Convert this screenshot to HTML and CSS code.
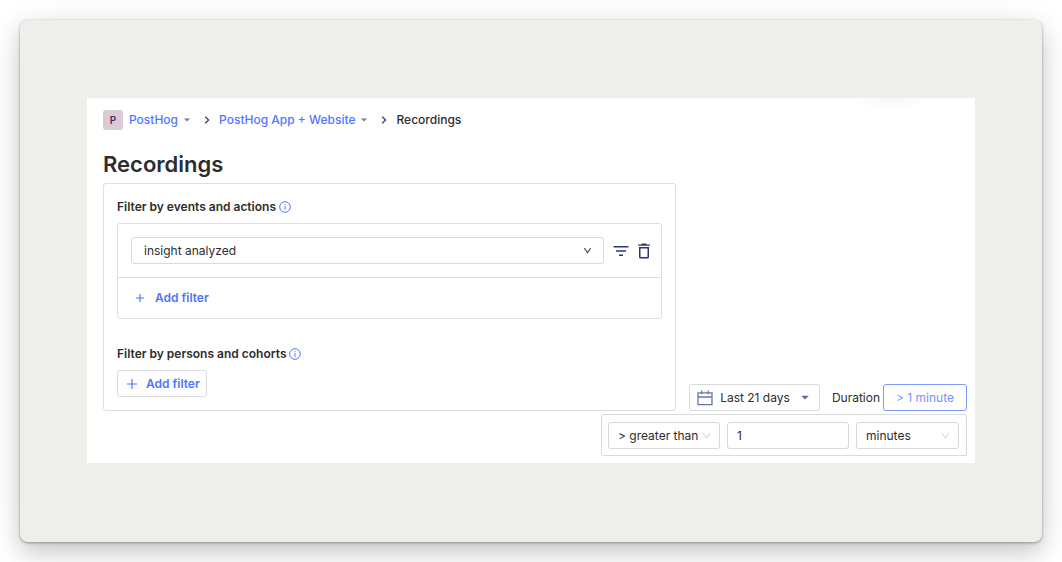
FILE: index.html
```html
<!DOCTYPE html>
<html lang="en">
<head>
<meta charset="utf-8">
<meta name="viewport" content="width=device-width, initial-scale=1">
<title>Recordings</title>
<link rel="stylesheet" href="styles.css">
</head>
<body>
<div class="stage">
  <main class="panel">
    <nav class="breadcrumbs" aria-label="Breadcrumb">
      <span class="avatar">P</span>
      <button class="crumb" type="button">PostHog
        <svg class="caret" viewBox="0 0 6 4" aria-hidden="true"><path d="M0 0.5h6L3 3.5z"/></svg>
      </button>
      <svg class="separator" viewBox="0 0 6 8" aria-hidden="true"><path d="M1.2 0.8 4.6 4 1.2 7.2"/></svg>
      <button class="crumb" type="button">PostHog App + Website
        <svg class="caret" viewBox="0 0 6 4" aria-hidden="true"><path d="M0 0.5h6L3 3.5z"/></svg>
      </button>
      <svg class="separator" viewBox="0 0 6 8" aria-hidden="true"><path d="M1.2 0.8 4.6 4 1.2 7.2"/></svg>
      <span class="current">Recordings</span>
    </nav>

    <h1 class="title">Recordings</h1>

    <div class="columns">
      <section class="filters">
        <div class="filter-label">
          <label for="event">Filter by events and actions</label>
          <svg class="info" viewBox="0 0 12 12" aria-hidden="true"><circle cx="6" cy="6" r="5.3"/><path d="M6 5.2v3.6M6 3.2v1"/></svg>
        </div>
        <div class="event-box">
          <div class="event-row">
            <div class="select select-event">
              <select id="event"><option>insight analyzed</option></select>
              <svg class="chevron chevron-dark" viewBox="0 0 10 10" aria-hidden="true"><path d="M1.5 2.4 5 7.4 8.5 2.4"/></svg>
            </div>
            <button class="icon-button" type="button" aria-label="Filter event">
              <svg class="filter-icon" viewBox="0 0 16 12" aria-hidden="true"><path d="M0.5 1.8h15M3 6h10M6 10.2h4"/></svg>
            </button>
            <button class="icon-button" type="button" aria-label="Delete event">
              <svg class="trash-icon" viewBox="0 0 12 16" aria-hidden="true"><path d="M0.2 1.4h3L4 0.5h4l0.8 0.9h3v1.3H0.2z"/><path fill-rule="evenodd" d="M1 3.9h10v10a1.5 1.5 0 0 1-1.5 1.5h-7A1.5 1.5 0 0 1 1 13.9zM2.5 5.4v8.5h7V5.4z"/></svg>
            </button>
          </div>
          <button class="add-row" type="button">
            <svg class="plus" viewBox="0 0 10 10" aria-hidden="true"><path d="M5 1v8M1 5h8"/></svg>Add filter
          </button>
        </div>

        <div class="filter-label">
          <span>Filter by persons and cohorts</span>
          <svg class="info" viewBox="0 0 12 12" aria-hidden="true"><circle cx="6" cy="6" r="5.3"/><path d="M6 5.2v3.6M6 3.2v1"/></svg>
        </div>
        <button class="add-button" type="button">
          <svg class="plus" viewBox="0 0 10 10" aria-hidden="true"><path d="M5 0v10M0 5h10"/></svg>Add filter
        </button>
      </section>

      <div class="controls">
        <button class="date-button" type="button">
          <svg class="calendar" viewBox="0 0 16 16" aria-hidden="true"><path d="M1 2.8h14v11.9H1zM1 7h14M4.7 0.6v3.6M11.3 0.6v3.6"/></svg>
          Last 21 days
          <svg class="caret caret-large" viewBox="0 0 6 4" aria-hidden="true"><path d="M0 0.5h6L3 3.5z"/></svg>
        </button>
        <div class="duration">
          <span>Duration</span>
          <button class="duration-button" type="button">&gt; 1 minute</button>
        </div>
      </div>
    </div>

    <div class="duration-popup">
      <div class="select select-operator">
        <select aria-label="Operator"><option>&gt; greater than</option></select>
        <svg class="chevron" viewBox="0 0 10 10" aria-hidden="true"><path d="M1.2 2 5 8 8.8 2"/></svg>
      </div>
      <input class="amount" type="text" value="1" aria-label="Duration amount">
      <div class="select select-unit">
        <select aria-label="Duration unit"><option>minutes</option></select>
        <svg class="chevron" viewBox="0 0 10 10" aria-hidden="true"><path d="M1.2 2 5 8 8.8 2"/></svg>
      </div>
    </div>
  </main>
</div>
</body>
</html>
```

FILE: styles.css
```css
* {
  box-sizing: border-box;
}

body {
  margin: 0;
  padding: 20px;
  min-height: 100vh;
  background: #fff;
  color: #2d2d2d;
  font: 12px/20px Inter, "Liberation Sans", sans-serif;
  overflow: hidden;
}

button,
select,
input {
  margin: 0;
  color: inherit;
  font: inherit;
}

button {
  display: flex;
  align-items: center;
  padding: 0;
  border: 0;
  background: none;
  cursor: pointer;
}

svg {
  flex: none;
  fill: none;
}

.stage {
  padding: 78px 67px 79px;
  border-radius: 8px;
  background: #eeeeea;
  box-shadow: 0 0 36px rgba(0, 0, 0, 0.06), 0 12px 24px rgba(0, 0, 0, 0.18), 0 1px 3px rgba(0, 0, 0, 0.35);
}

.panel {
  padding: 12px 8px 7px 16px;
  background: radial-gradient(ellipse 40px 12px at 804px 0, #f7f7f5, #fff);
}

.breadcrumbs {
  display: flex;
  align-items: center;
  font-weight: 500;
}

.avatar {
  width: 20px;
  margin-right: 6px;
  border-radius: 3px;
  background: #dccbd7;
  color: #51285a;
  font-size: 10px;
  font-weight: 600;
  text-align: center;
}

.crumb {
  gap: 6px;
  color: #5375ff;
  font-weight: 500;
}

.caret {
  width: 6px;
  height: 4px;
  fill: #747ea0;
}

.caret-large {
  width: 8px;
  height: 5px;
  margin-left: 4px;
  fill: #5d6ca3;
}

.separator {
  width: 6px;
  height: 8px;
  margin: 0 9px 0 14px;
  stroke: #35416b;
  stroke-width: 1.3;
}

.title {
  margin: 18px 0 3px;
  font-size: 22px;
  font-weight: 600;
  line-height: 32px;
}

.columns {
  display: flex;
  align-items: flex-end;
  justify-content: space-between;
  gap: 13px;
}

.filters {
  flex: 1;
  padding: 13px;
  border: 1px solid #dedede;
  border-radius: 3px;
}

.filter-label {
  display: flex;
  align-items: center;
  gap: 3px;
  margin-bottom: 6px;
  font-weight: 600;
}

.info {
  width: 12px;
  height: 12px;
  stroke: #5375ff;
  stroke-width: 1;
}

.event-box {
  margin-bottom: 25px;
  border: 1px solid #dedede;
  border-radius: 3px;
}

.event-row {
  display: flex;
  align-items: center;
  padding: 13px 11px 13px 13px;
  border-bottom: 1px solid #dedede;
}

.icon-button {
  margin-left: 9px;
}

.filter-icon {
  width: 16px;
  height: 12px;
  stroke: #2b3570;
  stroke-width: 1.6;
}

.trash-icon {
  width: 12px;
  height: 16px;
  fill: #2b3570;
}

.select {
  position: relative;
}

.select select {
  display: block;
  width: 100%;
  height: 27px;
  padding: 0 20px 0 9px;
  border: 1px solid #d9d9d9;
  border-radius: 3px;
  background: #fff;
  appearance: none;
}

.select-event {
  flex: 1;
}

.select-event select {
  padding-left: 12px;
}

.chevron {
  position: absolute;
  top: 9px;
  right: 9px;
  width: 9px;
  height: 9px;
  stroke: #c9c9c9;
  stroke-width: 1;
  pointer-events: none;
}

.chevron-dark {
  right: 12px;
  stroke: #555;
  stroke-width: 1.3;
}

.add-row,
.add-button {
  color: #4f73ff;
  font-weight: 600;
}

.add-row {
  gap: 10px;
  width: 100%;
  height: 40px;
  padding-left: 17px;
}

.add-button {
  gap: 9px;
  height: 27px;
  padding: 0 6px 0 9px;
  border: 1px solid #dcdcdc;
  border-radius: 3px;
}

.plus {
  width: 10px;
  height: 10px;
  stroke: #4f73ff;
  stroke-width: 1.2;
}

.controls,
.duration {
  display: flex;
  align-items: center;
}

.controls {
  gap: 12px;
}

.duration {
  gap: 3px;
}

.date-button {
  gap: 7px;
  height: 27px;
  padding: 0 10px 0 7px;
  border: 1px solid #d9d9d9;
  border-radius: 3px;
}

.calendar {
  width: 16px;
  height: 16px;
  stroke: #6775a8;
  stroke-width: 1.3;
}

.duration-button {
  height: 27px;
  padding: 0 12px;
  border: 1px solid #7d9bff;
  border-radius: 3px;
  color: #7594ff;
}

.duration-popup {
  display: flex;
  gap: 7px;
  width: fit-content;
  margin: 3px 0 0 auto;
  padding: 7px 7px 6px 6px;
  border: 1px solid #d9d9d9;
  border-radius: 3px 3px 0 3px;
}

.select-operator {
  width: 112px;
}

.select-unit {
  width: 103px;
}

.amount {
  width: 122px;
  height: 27px;
  padding: 0 9px;
  border: 1px solid #d9d9d9;
  border-radius: 3px;
}
```
